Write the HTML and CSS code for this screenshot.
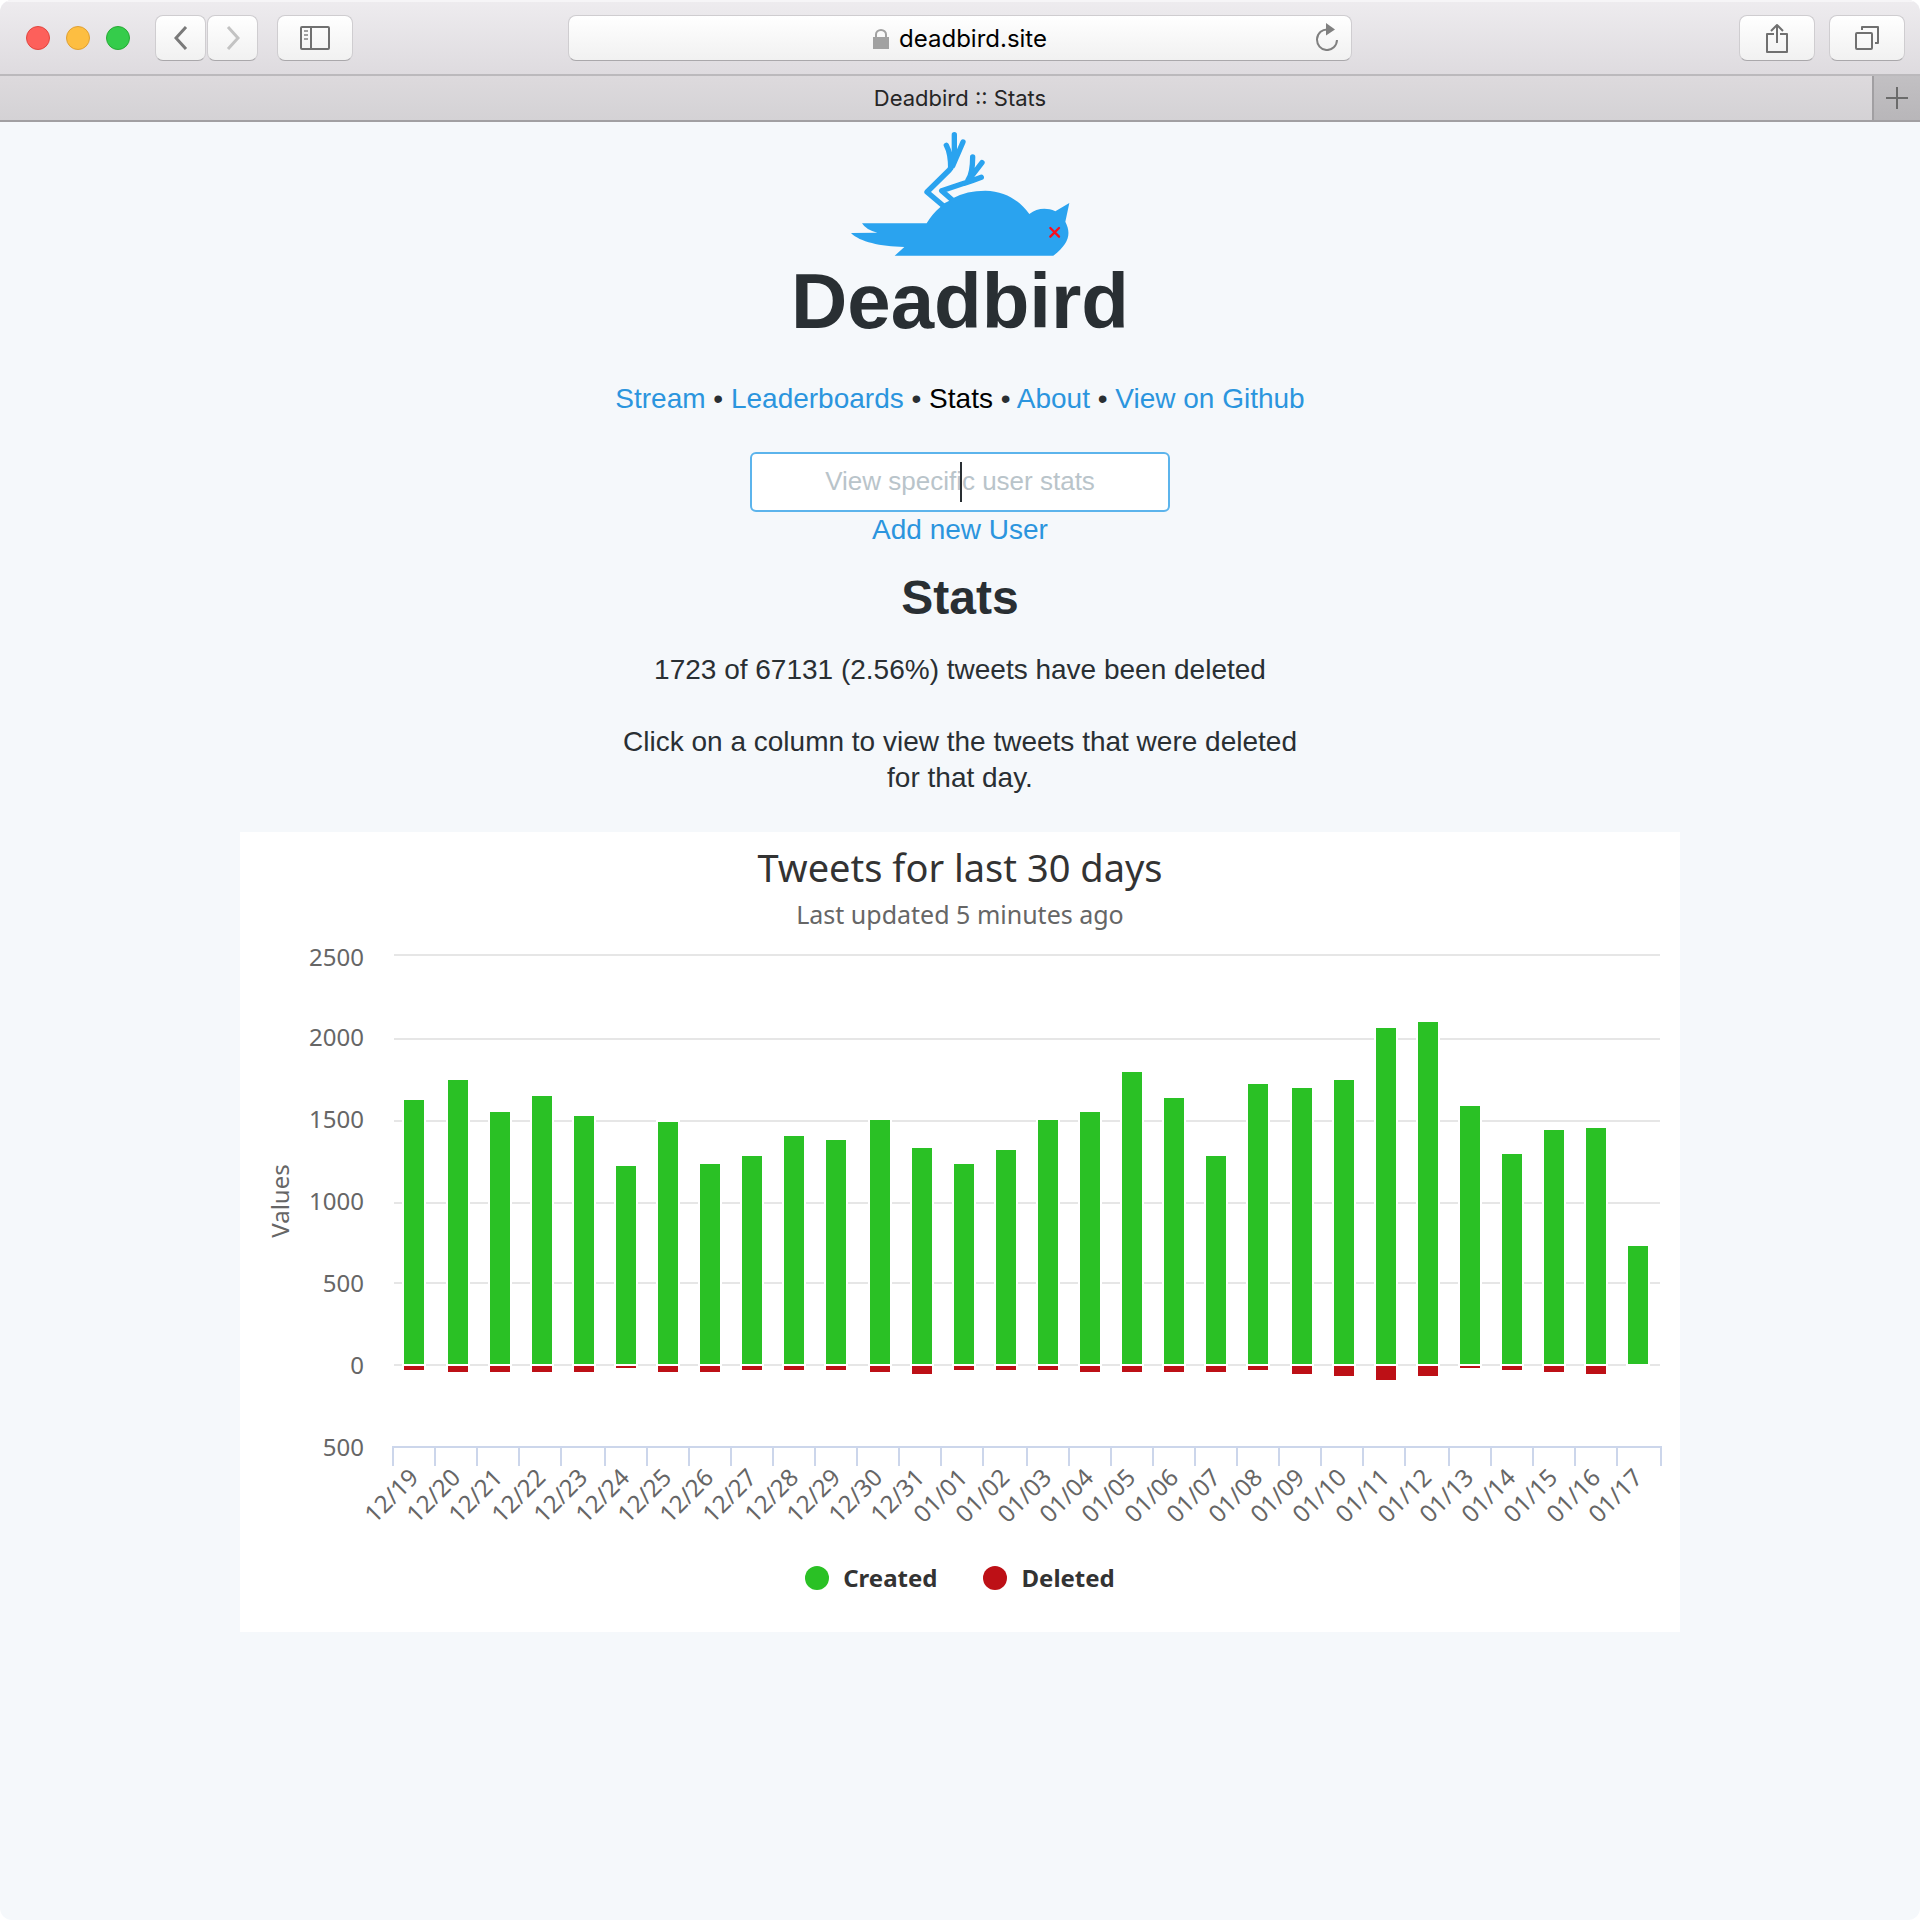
FILE: index.html
```html
<!DOCTYPE html>
<html lang="en">
<head>
<meta charset="utf-8">
<meta name="viewport" content="width=device-width, initial-scale=1">
<title>Deadbird :: Stats</title>
<link rel="stylesheet" href="styles.css">
</head>
<body>
<div class="window">
  <header class="toolbar">
    <div class="toolbar-left">
      <div class="lights">
        <button class="light light-close" aria-label="Close"></button>
        <button class="light light-min" aria-label="Minimize"></button>
        <button class="light light-zoom" aria-label="Zoom"></button>
      </div>
      <div class="history">
        <button class="tool tool-nav" aria-label="Back"><svg width="14" height="24" viewBox="0 0 14 24"><path class="chevron" d="M12 1 2 12l10 11"/></svg></button>
        <button class="tool tool-nav" aria-label="Forward" disabled><svg width="14" height="24" viewBox="0 0 14 24"><path class="chevron" d="M2 1l10 11L2 23"/></svg></button>
      </div>
      <button class="tool tool-wide" aria-label="Sidebar"><svg width="30" height="24" viewBox="0 0 30 24"><rect class="line" x="1" y="1" width="28" height="22" rx="1"/><path class="line" d="M11 1v22"/><path class="faint" d="M4 5h4M4 9h4M4 13h4"/></svg></button>
    </div>
    <div class="address">
      <svg class="lock" width="16" height="20" viewBox="0 0 16 20"><path d="M3 9V5.500a5 4.500 0 0 1 10 0V9" fill="none" stroke="#a1a1a1" stroke-width="2"/><path d="M0 8h16v12H0z" fill="#a1a1a1"/></svg>
      <span>deadbird.site</span>
      <button class="reload" aria-label="Reload"><svg width="24" height="28" viewBox="0 0 24 28"><path d="M13 6.500A10 10.300 0 1 0 22 17" fill="none" stroke="#808080" stroke-width="2"/><path d="M11 0l9 6.500-9 6z" fill="#808080"/></svg></button>
    </div>
    <div class="toolbar-right">
      <button class="tool tool-wide" aria-label="Share"><svg width="24" height="32" viewBox="0 0 24 32"><path class="line" d="M9 12H2v18h20V12h-7M12 21V3M6 9l6-6 6 6"/></svg></button>
      <button class="tool tool-wide" aria-label="Show all tabs"><svg width="24" height="24" viewBox="0 0 24 24"><rect class="line" x="1" y="7" width="16" height="16" rx="1"/><path class="line" d="M7 4V1h16v16h-3"/></svg></button>
    </div>
  </header>
  <div class="tabs">
    <div class="tab">Deadbird :: Stats</div>
    <button class="new-tab" aria-label="New tab"><svg width="22" height="22" viewBox="0 0 22 22"><path d="M11 0v22M0 11h22" stroke="#6b6b6b" stroke-width="2"/></svg></button>
  </div>

  <main class="page">
    <svg class="bird" width="220" height="125" viewBox="210 33 660 375" role="img" aria-label="Dead bird">
      <path class="bird-leg" d="M488 256 441 216 508 150Q518 138 523 120M523 44V118M499 76Q512 100 512 145M549 66 518 138"/>
      <path class="bird-leg" d="M516 239 485 212 552 190Q574 184 604 172M578 111Q578 160 564 180M606 128 562 185"/>
      <path class="bird-body" d="M213 339 292 338Q258 330 246 310H440Q456 282 482 260L493 250 508 242 520 234Q560 212 616 212C675 214 715 238 748 282 770 266 797 261 826 274L868 249 856 305C874 340 868 370 820 407H344L373 381C300 379 240 366 213 339z"/>
      <path class="bird-eye" d="M811 324l26 26M837 324l-26 26"/>
    </svg>
    <h1>Deadbird</h1>
    <nav class="menu"><a href="#">Stream</a> • <a href="#">Leaderboards</a> • <a href="#" class="current">Stats</a> • <a href="#">About</a> • <a href="#">View on Github</a></nav>
    <form class="search">
      <input type="text" aria-label="View specific user stats" placeholder="View specific user stats">
      <span class="caret"></span>
    </form>
    <a class="add" href="#">Add new User</a>
    <h2>Stats</h2>
    <p class="copy">1723 of 67131 (2.56%) tweets have been deleted</p>
    <p class="copy">Click on a column to view the tweets that were deleted for that day.</p>

    <section class="chart">
      <h3>Tweets for last 30 days</h3>
      <p class="updated">Last updated 5 minutes ago</p>
      <svg class="plot" viewBox="0 100 1440 600" role="img" aria-label="Tweets created and deleted per day">
        <path class="grid" d="M154 123H1420M154 207H1420M154 289H1420M154 371H1420M154 451H1420M154 533H1420"/>
        <path class="created" d="M164 532V268h20V532zM208 532V248h20V532zM250 532V280h20V532zM292 532V264h20V532zM334 532V284h20V532zM376 532V334h20V532zM418 532V290h20V532zM460 532V332h20V532zM502 532V324h20V532zM544 532V304h20V532zM586 532V308h20V532zM630 532V288h20V532zM672 532V316h20V532zM714 532V332h20V532zM756 532V318h20V532zM798 532V288h20V532zM840 532V280h20V532zM882 532V240h20V532zM924 532V266h20V532zM966 532V324h20V532zM1008 532V252h20V532zM1052 532V256h20V532zM1094 532V248h20V532zM1136 532V196h20V532zM1178 532V190h20V532zM1220 532V274h20V532zM1262 532V322h20V532zM1304 532V298h20V532zM1346 532V296h20V532zM1388 532V414h20V532z"/>
        <path class="deleted" d="M164 534v4h20v-4zM208 534v6h20v-6zM250 534v6h20v-6zM292 534v6h20v-6zM334 534v6h20v-6zM376 534v2h20v-2zM418 534v6h20v-6zM460 534v6h20v-6zM502 534v4h20v-4zM544 534v4h20v-4zM586 534v4h20v-4zM630 534v6h20v-6zM672 534v8h20v-8zM714 534v4h20v-4zM756 534v4h20v-4zM798 534v4h20v-4zM840 534v6h20v-6zM882 534v6h20v-6zM924 534v6h20v-6zM966 534v6h20v-6zM1008 534v4h20v-4zM1052 534v8h20v-8zM1094 534v10h20v-10zM1136 534v14h20v-14zM1178 534v10h20v-10zM1220 534v2h20v-2zM1262 534v4h20v-4zM1304 534v6h20v-6zM1346 534v8h20v-8z"/>
        <path class="axis" d="M152 615H1422M153 616v18M195 616v18M237 616v18M279 616v18M321 616v18M365 616v18M407 616v18M449 616v18M491 616v18M533 616v18M575 616v18M617 616v18M659 616v18M701 616v18M743 616v18M787 616v18M829 616v18M871 616v18M913 616v18M955 616v18M997 616v18M1039 616v18M1081 616v18M1123 616v18M1165 616v18M1209 616v18M1251 616v18M1293 616v18M1335 616v18M1377 616v18M1421 616v18"/>
        <g class="value-labels">
          <text x="124" y="134">2500</text>
          <text x="124" y="214">2000</text>
          <text x="124" y="296">1500</text>
          <text x="124" y="378">1000</text>
          <text x="124" y="460">500</text>
          <text x="124" y="542">0</text>
          <text x="124" y="624">500</text>
        </g>
        <text class="axis-title" transform="translate(49 369) rotate(-90)">Values</text>
        <g class="day-labels">
          <text transform="translate(180 647) rotate(-45)">12/19</text>
          <text transform="translate(222 647) rotate(-45)">12/20</text>
          <text transform="translate(264 647) rotate(-45)">12/21</text>
          <text transform="translate(307 647) rotate(-45)">12/22</text>
          <text transform="translate(349 647) rotate(-45)">12/23</text>
          <text transform="translate(391 647) rotate(-45)">12/24</text>
          <text transform="translate(433 647) rotate(-45)">12/25</text>
          <text transform="translate(475 647) rotate(-45)">12/26</text>
          <text transform="translate(518 647) rotate(-45)">12/27</text>
          <text transform="translate(560 647) rotate(-45)">12/28</text>
          <text transform="translate(602 647) rotate(-45)">12/29</text>
          <text transform="translate(644 647) rotate(-45)">12/30</text>
          <text transform="translate(686 647) rotate(-45)">12/31</text>
          <text transform="translate(729 647) rotate(-45)">01/01</text>
          <text transform="translate(771 647) rotate(-45)">01/02</text>
          <text transform="translate(813 647) rotate(-45)">01/03</text>
          <text transform="translate(855 647) rotate(-45)">01/04</text>
          <text transform="translate(897 647) rotate(-45)">01/05</text>
          <text transform="translate(940 647) rotate(-45)">01/06</text>
          <text transform="translate(982 647) rotate(-45)">01/07</text>
          <text transform="translate(1024 647) rotate(-45)">01/08</text>
          <text transform="translate(1066 647) rotate(-45)">01/09</text>
          <text transform="translate(1108 647) rotate(-45)">01/10</text>
          <text transform="translate(1151 647) rotate(-45)">01/11</text>
          <text transform="translate(1193 647) rotate(-45)">01/12</text>
          <text transform="translate(1235 647) rotate(-45)">01/13</text>
          <text transform="translate(1277 647) rotate(-45)">01/14</text>
          <text transform="translate(1319 647) rotate(-45)">01/15</text>
          <text transform="translate(1362 647) rotate(-45)">01/16</text>
          <text transform="translate(1404 647) rotate(-45)">01/17</text>
        </g>
      </svg>
      <ul class="legend">
        <li><span class="dot dot-created"></span>Created</li>
        <li><span class="dot dot-deleted"></span>Deleted</li>
      </ul>
    </section>
  </main>
</div>
</body>
</html>
```
FILE: styles.css
```css
* { box-sizing: border-box; }
body { margin: 0; background: #fff; }
button { margin: 0; padding: 0; border: 0; background: none; }
svg { display: block; }
h1, h2, h3, p, ul { margin: 0; padding: 0; }

.window {
  min-height: 100vh;
  border-radius: 12px;
  overflow: hidden;
  background: #f5f8fb;
}

.toolbar {
  display: grid;
  grid-template-columns: 1fr minmax(0, 784px) 1fr;
  align-items: center;
  height: 76px;
  padding: 2px 15px 0;
  border-bottom: 2px solid #bbb9bc;
  box-shadow: inset 0 2px #f6f5f7;
  background: linear-gradient(#eeecef, #dedbdf);
}
.toolbar-left, .toolbar-right, .lights, .history { display: flex; align-items: center; }
.toolbar-left { padding-left: 11px; }
.toolbar-right { justify-content: flex-end; gap: 14px; }
.lights { gap: 16px; margin-right: 25px; }
.light { width: 24px; height: 24px; border-radius: 50%; border: 1px solid; }
.light-close { background: #fd605b; border-color: #e2463f; }
.light-min { background: #fdbe41; border-color: #e0a033; }
.light-zoom { background: #35cc4b; border-color: #27aa35; }
.history { gap: 1px; margin-right: 19px; }
.tool, .address {
  display: flex;
  align-items: center;
  justify-content: center;
  height: 46px;
  border: 1px solid #cfcdd0;
  border-bottom-color: #aaa8ab;
  border-radius: 8px;
  background: linear-gradient(#fff, #f1f1f1);
}
.tool-nav { width: 51px; }
.tool-wide { width: 76px; }
.chevron { fill: none; stroke: #7a7a7a; stroke-width: 3; }
.tool:disabled .chevron { stroke: #c3c3c3; }
.line { fill: none; stroke: #707070; stroke-width: 2; stroke-linejoin: round; }
.faint { stroke: #a0a0a0; stroke-width: 2; }
.address {
  position: relative;
  gap: 10px;
  padding-top: 2px;
  font: 24px/30px Inter, sans-serif;
  color: #000;
}
.reload { position: absolute; right: 12px; top: 7px; }

.tabs {
  display: flex;
  height: 46px;
  border-bottom: 2px solid #a19fa2;
  background: linear-gradient(#dddadd, #d4d2d5);
}
.tab {
  flex: 1;
  padding-left: 48px;
  font: 22px/44px Inter, sans-serif;
  text-align: center;
  color: #262626;
}
.new-tab {
  display: flex;
  align-items: center;
  justify-content: center;
  width: 48px;
  border-left: 2px solid #a19fa2;
  background: linear-gradient(#c2c0c3, #b8b6b9);
}

.page {
  display: flex;
  flex-direction: column;
  align-items: center;
  padding: 9px 20px 20px;
  font: 28px/36px "Liberation Sans", Arial, sans-serif;
  color: #292f33;
}
.bird-body { fill: #2aa3ef; }
.bird-leg { fill: none; stroke: #2aa3ef; stroke-width: 16; stroke-linecap: round; stroke-linejoin: round; }
.bird-eye { stroke: #fb0d1b; stroke-width: 7; stroke-linecap: round; }
h1 { font-size: 78px; font-weight: 700; line-height: 90px; }
.menu { margin-top: 35px; text-align: center; }
a { color: #2b95de; text-decoration: none; }
.menu .current { color: #000; }
.search { position: relative; margin-top: 35px; }
.search input {
  display: block;
  width: 420px;
  height: 60px;
  padding: 0 8px 2px;
  border: 2px solid #5cb4ec;
  border-radius: 6px;
  background: #fff;
  font: 26px "Liberation Sans", Arial, sans-serif;
  text-align: center;
  outline: none;
}
.search input::placeholder { color: #b9c4ca; opacity: 1; }
.caret { position: absolute; left: 50%; top: 10px; width: 2px; height: 40px; background: #292f33; }
h2 { margin: 20px 0 24px; font-size: 48px; font-weight: 700; line-height: 60px; }
.copy { max-width: 700px; margin-bottom: 36px; text-align: center; }

.chart {
  width: 100%;
  max-width: 1440px;
  padding-bottom: 36px;
  background: #fff;
  font-family: "Noto Sans", sans-serif;
  color: #333;
}
.chart h3 { padding-top: 10px; font-size: 38px; font-weight: 400; line-height: 50px; text-align: center; }
.updated { padding-top: 4px; font-size: 25px; line-height: 36px; text-align: center; color: #666; }
.plot { width: 100%; height: auto; }
.grid { stroke: #e6e6e6; stroke-width: 2; }
.axis { stroke: #ccd6eb; stroke-width: 2; }
.created, .deleted { stroke: #fff; stroke-width: 4; paint-order: stroke; }
.created { fill: #2ac125; }
.deleted { fill: #bd1016; }
.plot text { font-size: 24px; fill: #666; }
.value-labels text, .day-labels text { text-anchor: end; }
.axis-title { text-anchor: middle; }
.legend {
  display: flex;
  justify-content: center;
  gap: 46px;
  padding-top: 28px;
  list-style: none;
  font-size: 24px;
  font-weight: 700;
  line-height: 36px;
}
.legend li { display: flex; align-items: center; gap: 14px; }
.dot { width: 24px; height: 24px; border-radius: 50%; }
.dot-created { background: #2ac125; }
.dot-deleted { background: #bd1016; }
```
